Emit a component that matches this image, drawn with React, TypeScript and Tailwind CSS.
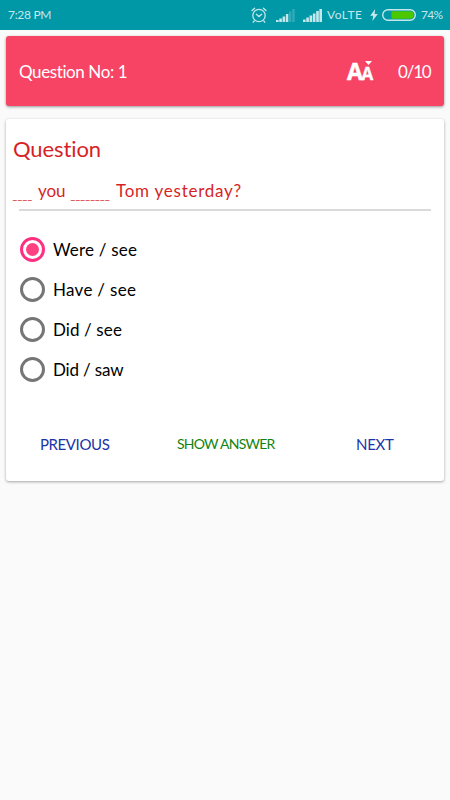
import { useState } from "react";
import clsx from "clsx";

const OPTIONS = [
  { label: "Were / see", tracking: "tracking-[0.2px]" },
  { label: "Have / see", tracking: "tracking-[0.3px]" },
  { label: "Did / see", tracking: "tracking-[0.1px]" },
  { label: "Did / saw", tracking: "tracking-[-0.15px]" },
];

function AlarmIcon() {
  return (
    <svg width="16" height="16" viewBox="0 0 16 16" fill="none" stroke="currentColor" strokeWidth="1.3" strokeLinecap="round">
      <circle cx="8" cy="8.5" r="6.2" />
      <path d="M5.3 7.3 8 9.6l2.7-2.3" />
      <path d="M1 3.6 3.6 1.2M15 3.6 12.4 1.2M3.2 14l-1 1.2M12.8 14l1 1.2" />
    </svg>
  );
}

function WeakSignalIcon() {
  return (
    <svg width="19" height="13" viewBox="0 0 19 13" fill="currentColor">
      <rect x="0" y="11" width="2.6" height="2" />
      <rect x="3.3" y="9.5" width="2.6" height="3.5" />
      <rect x="6.6" y="7.5" width="2.6" height="5.5" />
      <rect x="9.9" y="5" width="2.4" height="8" />
      <rect x="13" y="2.5" width="2.4" height="10.5" opacity="0.25" />
      <rect x="16.3" y="0" width="2.4" height="13" opacity="0.25" />
    </svg>
  );
}

function StrongSignalIcon() {
  return (
    <svg width="19" height="13" viewBox="0 0 19 13" fill="currentColor">
      <rect x="0" y="10.5" width="2.6" height="2.5" />
      <rect x="3.3" y="8.5" width="2.6" height="4.5" />
      <rect x="6.6" y="6.5" width="2.6" height="6.5" />
      <rect x="9.9" y="4.5" width="2.6" height="8.5" />
      <rect x="13.2" y="2" width="2.6" height="11" />
      <rect x="16.4" y="0" width="2.6" height="13" />
    </svg>
  );
}

function BatteryIcon() {
  return (
    <svg width="34" height="12" viewBox="0 0 34 12" fill="none">
      <rect x="0.7" y="0.7" width="32.6" height="10.6" rx="5.3" stroke="currentColor" strokeWidth="1.4" />
      <path d="M9.5 2.3H28a3.7 3.7 0 0 1 0 7.4H9.5z" fill="#4cc800" />
    </svg>
  );
}

function StatusBar() {
  return (
    <div className="flex h-[30px] items-center bg-[#0097a7] pl-2 text-[#c5e8ec]">
      <span className="w-[242px] text-[12px] leading-none tracking-[-0.3px]">7:28 PM</span>
      <div className="flex items-center">
        <span className="ml-px"><AlarmIcon /></span>
        <span className="ml-[9px]"><WeakSignalIcon /></span>
        <span className="ml-2"><StrongSignalIcon /></span>
        <span className="ml-[5px] w-[42px] text-[12px] leading-none tracking-[0.5px] whitespace-nowrap">VoLTE</span>
        <svg className="ml-px" width="8" height="12" viewBox="0 0 8 12" fill="currentColor">
          <path d="M5.2 0 .2 6.8h3L2.4 12l5.4-7H4.6z" />
        </svg>
        <span className="ml-1"><BatteryIcon /></span>
        <span className="ml-[5px] text-[12px] leading-none tracking-[-0.7px]">74%</span>
      </div>
    </div>
  );
}

function FontSizeButton() {
  return (
    <button className="relative h-[18px] w-[26px] text-left font-['Open_Sans',sans-serif] leading-[18px] font-bold whitespace-nowrap">
      <span className="text-[23px] leading-[18px] tracking-[-1.5px] [-webkit-text-stroke:0.5px_#fff]">
        A<span className="text-[17px] [-webkit-text-stroke:0.3px_#fff]">A</span>
      </span>
      <svg className="absolute -top-px right-px" width="7" height="4" viewBox="0 0 7 4" fill="currentColor">
        <path d="M0 0h7L3.5 4z" />
      </svg>
    </button>
  );
}

export default function App() {
  const [selected, setSelected] = useState(0);

  return (
    <div className="h-[800px] w-[450px] overflow-hidden bg-[#fafafa] font-['Lato',sans-serif]">
      <StatusBar />

      <div className="px-1.5 pt-1.5">
        <header className="flex h-[70px] items-center rounded-[3px] bg-[#f74465] pr-3 pl-[13px] text-white shadow-[0_1px_3px_rgba(0,0,0,0.4)]">
          <h1 className="flex-1 text-[17px] leading-none tracking-[-0.4px]">Question No: 1</h1>
          <FontSizeButton />
          <span className="ml-[25px] w-[34px] text-[17px] leading-none tracking-[-1.2px] whitespace-nowrap">0/10</span>
        </header>

        <main className="mt-[13px] h-[362px] rounded-[3px] bg-white px-[7px] pt-[17px] shadow-[0_1px_3px_rgba(0,0,0,0.35)]">
          <h2 className="h-[26px] text-[22px] leading-[26px] tracking-[-0.1px] text-[#d61f26]">Question</h2>
          <p className="mt-[17px] flex h-6 items-center text-[17px] leading-6 whitespace-pre text-[#d61f26]">
            <span className="w-[25px] pt-[13px] font-['Liberation_Sans',sans-serif] text-[6.5px] font-bold tracking-[1.4px] [-webkit-text-stroke:0.3px_#d61f26]">____</span>
            <span className="w-[33px] tracking-[-0.1px]">you</span>
            <span className="w-[45px] pt-[13px] font-['Liberation_Sans',sans-serif] text-[6.5px] font-bold tracking-[1.3px] [-webkit-text-stroke:0.3px_#d61f26]">________</span>
            <span className="tracking-[0.75px]">Tom yesterday?</span>
          </p>
          <div className="mt-1.5 mr-[6px] ml-1.5 h-[2px] bg-[#dadada]" />

          <div className="mt-[18px] flex flex-col pl-[7px]">
            {OPTIONS.map((option, i) => (
              <button key={option.label} onClick={() => setSelected(i)} className="flex h-10 items-center text-left">
                <span
                  className={clsx(
                    "flex size-[25px] items-center justify-center rounded-full border-[3px]",
                    selected === i ? "border-[#ff2f80]" : "border-[#757575]"
                  )}
                >
                  {selected === i && <span className="size-[13px] rounded-full bg-[#ff4081]" />}
                </span>
                <span className={clsx("ml-2 pt-px text-[17px] leading-none text-black", option.tracking)}>
                  {option.label}
                </span>
              </button>
            ))}
          </div>

          <div className="mt-[43px] flex h-6 items-center pl-[27px] text-[15px] leading-none whitespace-nowrap text-[#1a34a8]">
            <button className="w-[137px] text-left tracking-[-0.4px]">PREVIOUS</button>
            <button className="w-[179px] text-left text-[14px] tracking-[-0.75px] text-[#118411]">SHOW ANSWER</button>
            <button className="tracking-[-0.3px]">NEXT</button>
          </div>
        </main>
      </div>
    </div>
  );
}
